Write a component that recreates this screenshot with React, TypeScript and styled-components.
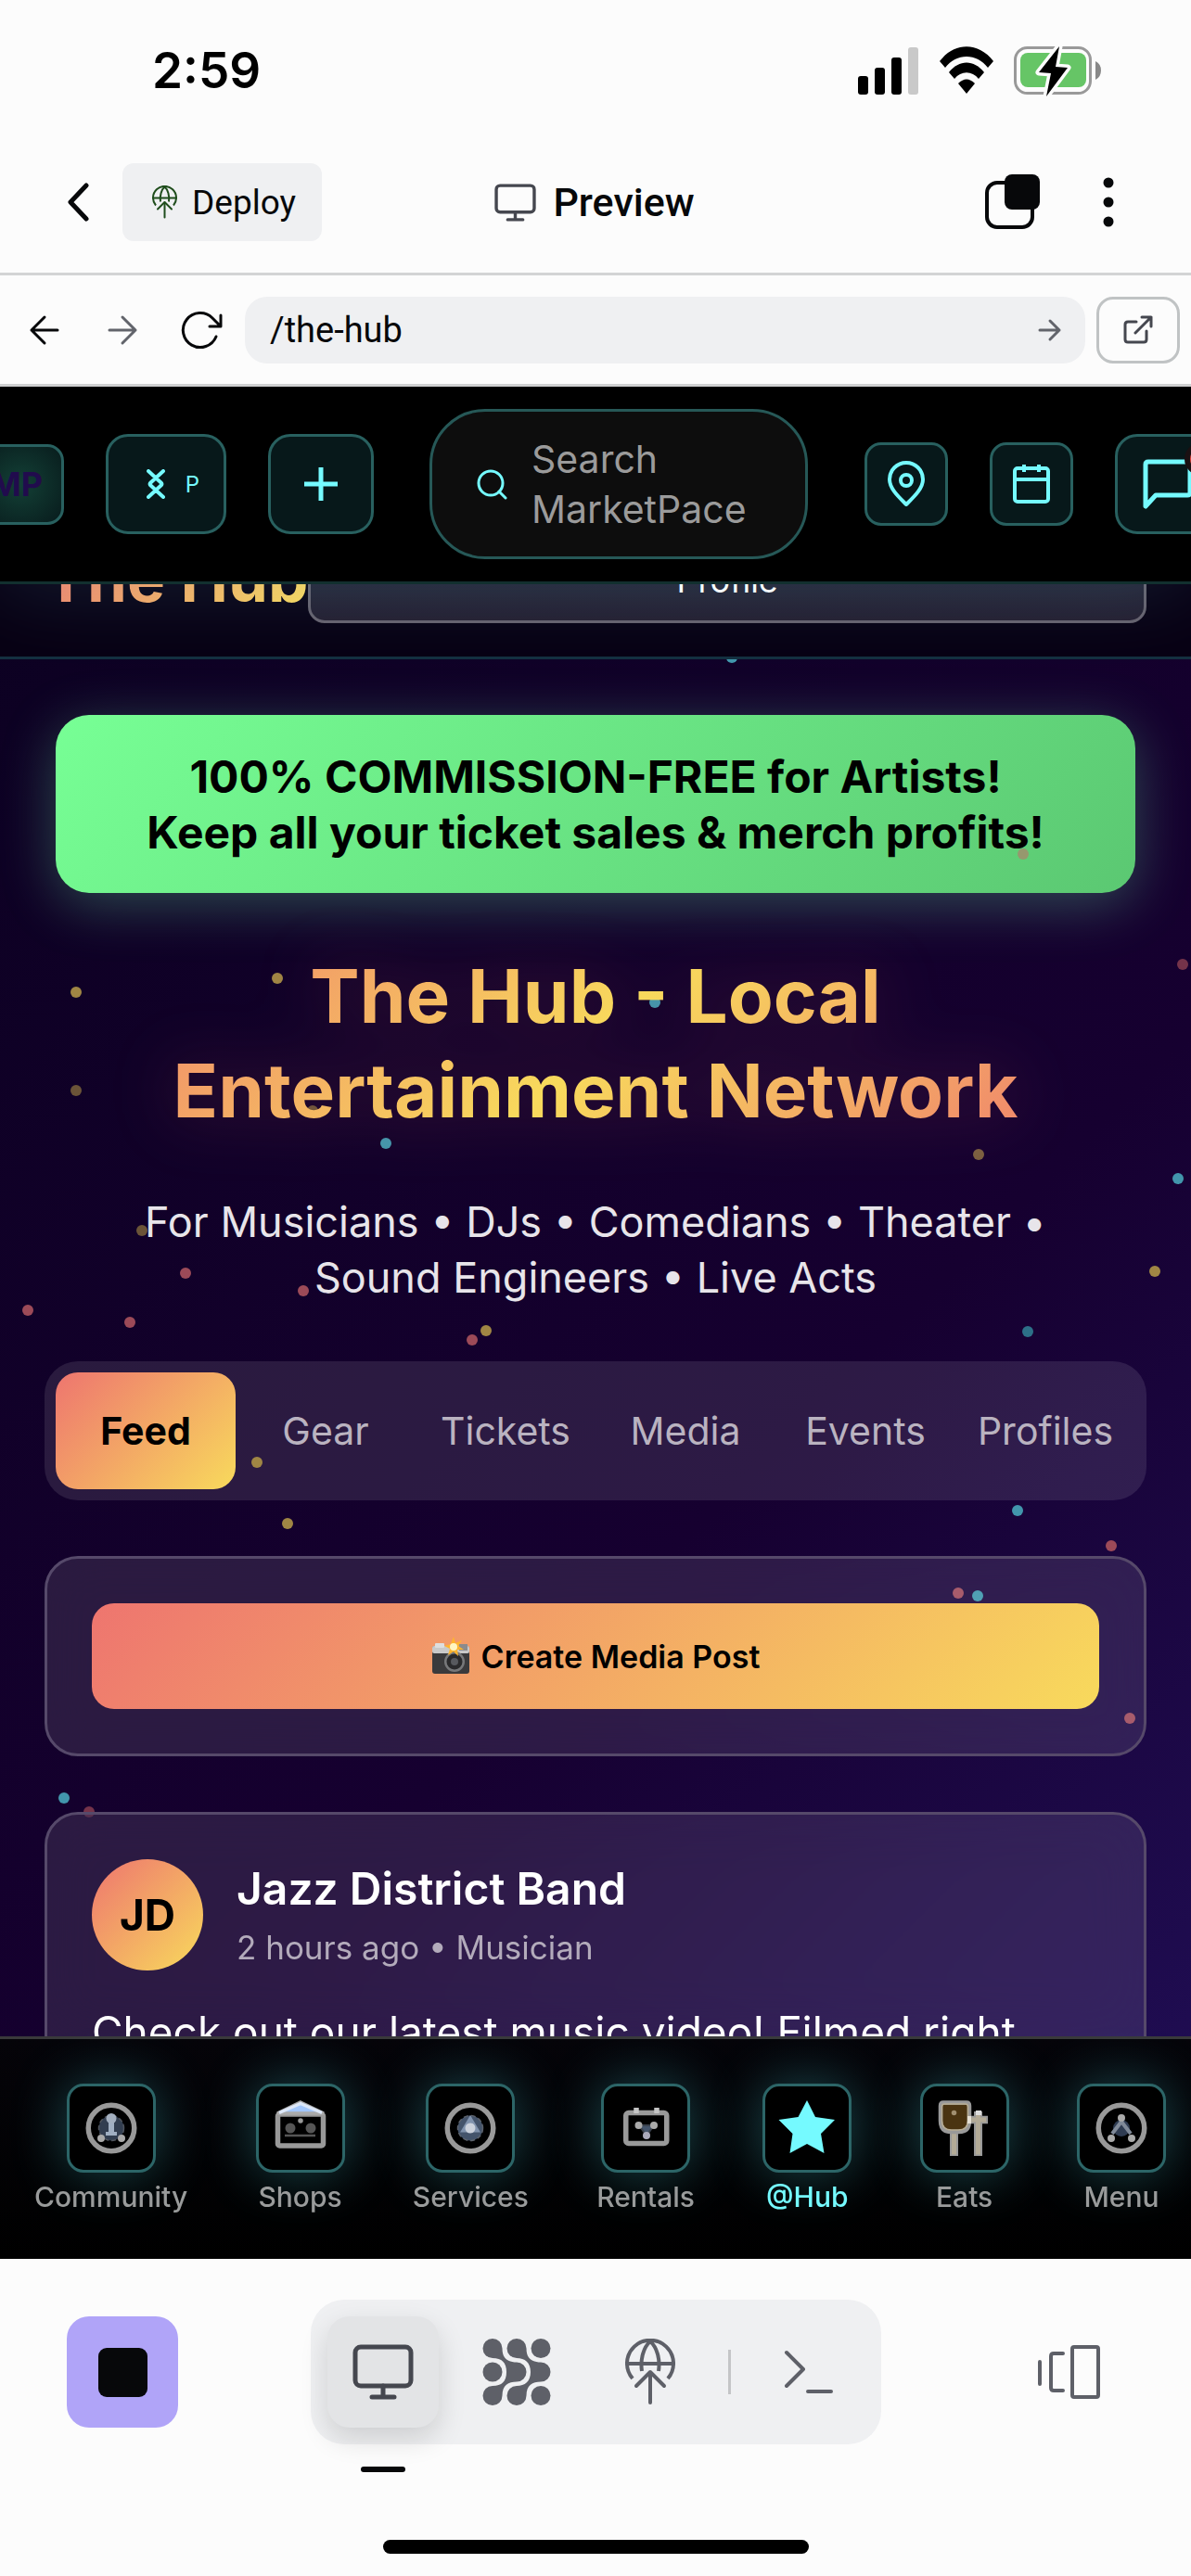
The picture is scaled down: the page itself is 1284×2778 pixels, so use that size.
import React from "react";
import styled, { createGlobalStyle, css } from "styled-components";

const GlobalStyle = createGlobalStyle`
  *, *::before, *::after { box-sizing: border-box; }
  html, body, #root { height: 100%; }
  body { margin: 0; background: #fcfcfc; font-family: Inter, "Liberation Sans", sans-serif; }
  button, input { font: inherit; color: inherit; }
  button { border: 0; padding: 0; background: none; cursor: pointer; }
  svg { display: block; flex: none; }
  h1, h2, h3, p { margin: 0; }
`;

const uiFont = `Roboto, "Noto Sans", sans-serif`;
const sunset = "linear-gradient(135deg, #ee756f, #f8da5c)";

const Screen = styled.div`
  display: flex;
  flex-direction: column;
  height: 100%;
  overflow: hidden;
`;

/* ---------- phone chrome ---------- */

const StatusBar = styled.div`
  display: flex;
  align-items: center;
  justify-content: space-between;
  height: 152px;
  padding: 0 97px 0 164px;
  color: #000;
`;

const Clock = styled.time`
  font-size: 53px;
  font-weight: 600;
`;

const StatusIcons = styled.div`
  display: flex;
  align-items: center;
  gap: 22px;
`;

const AppBar = styled.header`
  display: grid;
  grid-template-columns: 1fr auto 1fr;
  align-items: center;
  height: 145px;
  padding: 0 74px 10px 72px;
  border-bottom: 3px solid #d3d4d5;
  font-family: ${uiFont};
  color: #07080a;
`;

const BarSide = styled.div<{ $end?: boolean }>`
  display: flex;
  align-items: center;
  gap: ${(p) => (p.$end ? "58px" : "36px")};
  justify-content: ${(p) => (p.$end ? "flex-end" : "flex-start")};
`;

const DeployButton = styled.button`
  display: flex;
  align-items: center;
  gap: 16px;
  height: 84px;
  padding: 0 28px 0 32px;
  border-radius: 12px;
  background: #eff0f2;
  font-size: 37px;
`;

const BarTitle = styled.h1`
  display: flex;
  align-items: center;
  gap: 18px;
  font-size: 43px;
  font-weight: 500;
`;

const AddressBar = styled.form`
  display: flex;
  align-items: center;
  gap: 12px;
  height: 120px;
  padding: 0 12px 0 24px;
  border-bottom: 3px solid #cfd0d1;
  font-family: ${uiFont};
  color: #07080a;
`;

const AddressIcons = styled.div`
  display: flex;
  align-items: center;
  gap: 36px;
  margin-right: 12px;
`;

const AddressField = styled.label`
  display: flex;
  flex: 1;
  align-items: center;
  height: 72px;
  padding: 0 24px;
  border-radius: 24px;
  background: #eff0f2;
`;

const AddressInput = styled.input`
  flex: 1;
  min-width: 0;
  padding: 0 0 0 3px;
  border: 0;
  outline: 0;
  background: none;
  font-size: 38px;
`;

const OpenButton = styled.button`
  display: grid;
  place-items: center;
  width: 90px;
  height: 72px;
  border: 3px solid #c0c3c4;
  border-radius: 18px;
`;

/* ---------- previewed page ---------- */

const Web = styled.div`
  position: relative;
  display: flex;
  flex: 1;
  flex-direction: column;
  min-height: 0;
  overflow: hidden;
  background: linear-gradient(135deg, #0b0120 0%, #160030 60%, #210f58 100%);
  color: #fff;
`;

const SiteHeader = styled.nav`
  position: relative;
  z-index: 2;
  display: flex;
  align-items: center;
  gap: 45px;
  height: 213px;
  flex: none;
  border-bottom: 3px solid #12302f;
  background: #000;
  box-shadow: 0 6px 90px rgba(117, 250, 255, 0.12);
  color: #75faff;
`;

const tile = css`
  display: flex;
  flex: none;
  align-items: center;
  justify-content: center;
  border: 3px solid #28605f;
  background: #07181a;
`;

const LogoTile = styled.a`
  ${tile}
  justify-content: flex-end;
  width: 120px;
  height: 87px;
  margin-left: -51px;
  padding-right: 20px;
  border-radius: 18px;
  background: radial-gradient(circle at 70px 40px, #134036, #07181a 66px);
  color: #210b4d;
  font-size: 36px;
  font-weight: 700;
  text-decoration: none;
`;

const Tile = styled.button<{ $w: number }>`
  ${tile}
  width: ${(p) => p.$w}px;
  height: 108px;
  border-radius: 24px;
  font-size: 24px;
`;

const PaceTile = styled(Tile)`
  gap: 22px;
  padding-left: 15px;
`;

const SmallTile = styled.button`
  ${tile}
  width: 90px;
  height: 90px;
  border-radius: 18px;
`;

const ChatTile = styled(Tile)`
  position: relative;
`;

const ChatBadge = styled.span`
  position: absolute;
  top: 6px;
  left: 72px;
  width: 36px;
  height: 36px;
  border: 6px solid #1a1012;
  border-radius: 50%;
  background: #e8453c;
`;

const SearchPill = styled.label`
  display: flex;
  flex: none;
  align-items: center;
  gap: 26px;
  width: 408px;
  height: 162px;
  margin: 0 16px 0 15px;
  padding-left: 48px;
  border: 3px solid #265857;
  border-radius: 60px;
  background: #0d0d0d;
`;

const SearchText = styled.span`
  width: 240px;
  color: #9b9b9b;
  font-size: 41px;
  line-height: 54px;
`;

const HubBar = styled.div`
  position: relative;
  z-index: 1;
  display: flex;
  flex: none;
  align-items: flex-end;
  height: 81px;
  padding: 0 48px;
  border-bottom: 3px solid #143040;
  background: #080014;
  overflow: hidden;
`;

const HubName = styled.h2`
  flex: none;
  margin-bottom: 42px;
  background: ${sunset};
  background-clip: text;
  -webkit-background-clip: text;
  color: transparent;
  font-size: 69px;
  font-weight: 700;
  line-height: 84px;
`;

const ProfileButton = styled.button`
  flex: 1;
  height: 96px;
  margin-bottom: 36px;
  padding-top: 3px;
  border: 3px solid #66606d;
  border-radius: 18px;
  background: linear-gradient(#252a3e, #241d30);
  color: #fff;
  font-size: 36px;
`;

const Content = styled.main`
  position: relative;
  flex: 1;
  min-height: 0;
  overflow: hidden;
`;

const Particle = styled.span<{ $color: string; $front?: boolean }>`
  position: absolute;
  z-index: ${(p) => (p.$front ? 2 : 0)};
  width: 12px;
  height: 12px;
  margin: -6px 0 0 -6px;
  border-radius: 50%;
  background: ${(p) => p.$color};
`;

const Column = styled.div`
  position: relative;
  z-index: 1;
  display: flex;
  flex-direction: column;
  gap: 60px;
  padding: 60px 48px;
`;

const Hero = styled.section`
  text-align: center;
  padding: 0 12px;
`;

const Promo = styled.p`
  padding: 37px 48px 35px;
  border-radius: 36px;
  background: linear-gradient(135deg, #77ff95, #5bc872);
  box-shadow: 0 12px 60px rgba(117, 250, 180, 0.3);
  color: #000;
  font-size: 48px;
  font-weight: 700;
  line-height: 60px;
`;

const HeroTitle = styled.h2`
  margin-top: 60px;
  background: linear-gradient(135deg, #ee756f, #f8da5c 50%, #ee756f);
  background-clip: text;
  -webkit-background-clip: text;
  color: transparent;
  filter: drop-shadow(0 0 36px rgba(238, 117, 111, 0.24));
  font-size: 80px;
  font-weight: 700;
  line-height: 102px;
`;

const HeroText = styled.p`
  margin: 61px 48px 0;
  color: #e8e5ea;
  font-size: 45px;
  line-height: 60px;
`;

const Tabs = styled.div`
  display: grid;
  grid-template-columns: repeat(6, 1fr);
  padding: 12px;
  border-radius: 36px;
  background: rgba(255, 255, 255, 0.1);
`;

const Tab = styled.button<{ $active?: boolean }>`
  height: 126px;
  border-radius: 24px;
  color: ${(p) => (p.$active ? "#000" : "#bab3c0")};
  background: ${(p) => (p.$active ? sunset : "none")};
  font-size: 41px;
  font-weight: ${(p) => (p.$active ? 700 : 400)};
`;

const Card = styled.article`
  padding: 48px;
  border: 3px solid #56496a;
  border-radius: 36px;
  background: rgba(255, 255, 255, 0.1);
  backdrop-filter: blur(30px);
`;

const CreateButton = styled.button`
  display: flex;
  align-items: center;
  justify-content: center;
  gap: 12px;
  width: 100%;
  height: 114px;
  border-radius: 24px;
  background: ${sunset};
  color: #000;
  font-size: 34px;
  font-weight: 600;
`;

const PostHead = styled.header`
  display: flex;
  align-items: center;
  gap: 36px;
`;

const Avatar = styled.span`
  display: grid;
  place-items: center;
  width: 120px;
  height: 120px;
  border-radius: 50%;
  background: ${sunset};
  color: #000;
  font-size: 46px;
  font-weight: 700;
`;

const PostAuthor = styled.h3`
  font-size: 48px;
  font-weight: 600;
  line-height: 60px;
`;

const PostMeta = styled.p`
  margin-top: 9px;
  color: #b3abbb;
  font-size: 35px;
  line-height: 48px;
`;

const PostText = styled.p`
  margin-top: 33px;
  font-size: 46px;
  line-height: 66px;
`;

const SiteNav = styled.nav`
  position: relative;
  z-index: 2;
  display: flex;
  flex: none;
  align-items: flex-start;
  justify-content: space-between;
  height: 240px;
  padding: 48px 27px 0 37px;
  border-top: 3px solid #3a3a3b;
  background: linear-gradient(#050409, #000);
`;

const NavItem = styled.a<{ $active?: boolean }>`
  display: flex;
  flex-direction: column;
  align-items: center;
  gap: 8px;
  color: ${(p) => (p.$active ? "#75faff" : "#999b9b")};
  font-size: 30px;
  font-weight: 500;
  line-height: 36px;
  text-decoration: none;
`;

const NavIcon = styled.span`
  display: grid;
  place-items: center;
  width: 96px;
  height: 96px;
  border: 3px solid #2c6567;
  border-radius: 18px;
  background: #000;
  box-shadow: 0 0 60px rgba(80, 230, 235, 0.32);
`;

/* ---------- bottom toolbar ---------- */

const Toolbar = styled.footer`
  display: grid;
  grid-template-columns: 1fr auto 1fr;
  align-items: center;
  height: 244px;
  padding: 0 72px;
  flex: none;
`;

const StopButton = styled.button`
  display: grid;
  place-items: center;
  width: 120px;
  height: 120px;
  border-radius: 24px;
  background: #b0a4f8;
`;

const StopMark = styled.span`
  width: 53px;
  height: 53px;
  border-radius: 9px;
  background: #07080a;
`;

const ToolGroup = styled.div`
  display: flex;
  align-items: center;
  gap: 24px;
  height: 156px;
  padding: 0 18px;
  border-radius: 36px;
  background: #eff0f2;
  color: #5e6068;
`;

const Tool = styled.button<{ $active?: boolean }>`
  position: relative;
  display: grid;
  place-items: center;
  width: 120px;
  height: 120px;
  border-radius: 24px;
  ${(p) =>
    p.$active &&
    css`
      background: #e3e4e6;
      color: #40424a;
      box-shadow: 0 12px 30px rgba(0, 0, 0, 0.14);
      &::after {
        content: "";
        position: absolute;
        left: 36px;
        bottom: -48px;
        width: 48px;
        height: 6px;
        border-radius: 3px;
        background: #07080a;
      }
    `}
`;

const ToolDivider = styled.span`
  width: 3px;
  height: 48px;
  background: #c4c5c7;
`;

const DevicesButton = styled.button`
  justify-self: end;
  padding: 0 24px;
  color: #5e6068;
`;

const HomeArea = styled.div`
  display: flex;
  justify-content: center;
  flex: none;
  height: 98px;
  padding-top: 59px;
`;

const HomeBar = styled.span`
  width: 459px;
  height: 15px;
  border-radius: 8px;
  background: #000;
`;

/* ---------- drawings ---------- */

type StrokeProps = {
  w: number;
  h: number;
  sw?: number;
  color?: string;
  square?: boolean;
  children: React.ReactNode;
};

function Stroke({ w, h, sw = 4, color = "currentColor", square, children }: StrokeProps) {
  return (
    <svg
      width={w}
      height={h}
      viewBox={`0 0 ${w} ${h}`}
      fill="none"
      stroke={color}
      strokeWidth={sw}
      strokeLinecap={square ? "butt" : "round"}
      strokeLinejoin={square ? "miter" : "round"}
      aria-hidden="true"
    >
      {children}
    </svg>
  );
}

const Signal = () => (
  <svg width="66" height="52" viewBox="0 0 66 52" aria-hidden="true">
    <rect x="0" y="32" width="11" height="20" rx="3" />
    <rect x="18" y="23" width="11" height="29" rx="3" />
    <rect x="36" y="12" width="11" height="40" rx="3" />
    <rect x="54" y="1" width="11" height="51" rx="3" fill="#c9c9c9" />
  </svg>
);

const Wifi = () => (
  <svg width="58" height="52" viewBox="0 0 58 52" aria-hidden="true">
    <path d="M0 16 C16 -5 42 -5 58 16 L52 23 C40 7 18 7 6 23 Z" />
    <path d="M10 28 C21 14 37 14 48 28 L42 35 C35 26 23 26 16 35 Z" />
    <path d="M20 40 Q29 31 38 40 L29 51 Z" />
  </svg>
);

const Battery = () => (
  <svg width="94" height="56" viewBox="0 0 94 56" aria-hidden="true">
    <rect x="1.5" y="3.5" width="81" height="49" rx="13" fill="none" stroke="#999" strokeWidth="3" />
    <path d="M88 18 Q94 21 94 28 Q94 35 88 38 Z" fill="#888" />
    <rect x="7" y="9" width="71" height="37" rx="8" fill="#66c566" />
    <path
      d="M49 2 L27 30 L40 31 L35 56 L58 25 L45 24 Z"
      fill="#000"
      stroke="#fcfcfc"
      strokeWidth="7"
      strokeLinejoin="round"
      paintOrder="stroke"
    />
  </svg>
);

const GlobeUp = ({ w, h, sw, color }: { w: number; h: number; sw: number; color?: string }) => (
  <svg
    width={w}
    height={h}
    viewBox="0 0 54 72"
    fill="none"
    stroke={color || "currentColor"}
    strokeWidth={sw}
    strokeLinecap="round"
    strokeLinejoin="round"
    aria-hidden="true"
  >
    <path d="M8 43 A25 25 0 1 1 46 43" strokeLinecap="butt" />
    <path d="M18 35 C16 22 20 9 27 3 C34 9 38 22 36 35" strokeLinecap="butt" />
    <path d="M2 27 H52" />
    <path d="M27 37 V69" />
    <path d="M12 51 L27 36 L42 51" />
  </svg>
);

const Monitor = ({ w, h, sw }: { w: number; h: number; sw: number }) => (
  <svg
    width={w}
    height={h}
    viewBox="0 0 66 60"
    fill="none"
    stroke="#45474f"
    strokeWidth={sw}
    strokeLinecap="round"
    aria-hidden="true"
  >
    <rect x="3" y="3" width="60" height="42" rx="6" />
    <path d="M33 45 V57 M21 57 H45" />
  </svg>
);

const AgentMark = () => (
  <svg width="74" height="72" viewBox="0 0 74 72" fill="currentColor" aria-hidden="true">
    <circle cx="11" cy="36" r="10.5" />
    <circle cx="63" cy="10.5" r="10.5" />
    <circle cx="63" cy="61.5" r="10.5" />
    <path d="M11 0 A10.5 10.5 0 0 1 21.5 10.5 C21.5 22 28 25.5 37 25.5 A10.5 10.5 0 0 1 37 46.5 C28 46.5 21.5 50 21.5 61.5 A10.5 10.5 0 1 1 11 51 C21 51 26 46 26 36 C26 26 21 21 11 21 A10.5 10.5 0 0 1 11 0 Z" />
    <path d="M37 0 A10.5 10.5 0 0 1 47.5 10.5 C47.5 22 54 25.5 63 25.5 A10.5 10.5 0 0 1 63 46.5 C54 46.5 47.5 50 47.5 61.5 A10.5 10.5 0 1 1 37 51 C46 51 52 46 52 36 C52 26 46 21 37 21 A10.5 10.5 0 0 1 37 0 Z" />
  </svg>
);

const Camera = () => (
  <svg width="42" height="42" viewBox="0 0 42 42" aria-hidden="true">
    <rect x="1" y="10" width="40" height="30" rx="3" fill="#3a3a3c" />
    <rect x="1" y="10" width="40" height="8" rx="2" fill="#c9c9c9" />
    <rect x="4" y="7" width="10" height="5" rx="1" fill="#dedede" />
    <rect x="30" y="8" width="9" height="7" fill="#8b8b8d" />
    <circle cx="25" cy="27" r="11" fill="#77787a" />
    <circle cx="25" cy="27" r="8.5" fill="#2a2a2c" />
    <circle cx="25" cy="27" r="4" fill="#57595e" />
    <path d="M24 0 L26 7 L33 4 L29 10 L35 14 L28 14 L29 21 L24 16 L18 20 L20 13 L14 10 L21 8 Z" fill="#ffb52e" />
    <circle cx="24" cy="11" r="4" fill="#fff6c2" />
  </svg>
);

const NavArt = ({ children }: { children: React.ReactNode }) => (
  <svg width="90" height="90" viewBox="3 3 90 90" fill="none" aria-hidden="true">
    {children}
  </svg>
);

const Ring = () => <circle cx="48" cy="48" r="24.75" stroke="#999" strokeWidth="5.5" />;

const CommunityArt = () => (
  <NavArt>
    <Ring />
    <circle cx="48" cy="48" r="13.5" fill="#323e50" stroke="#50555d" strokeWidth="1.5" strokeDasharray="5 3" />
    <path d="M45 40 H51 V52 H54 V56 H42 V52 H45 Z" fill="#a0afc2" />
    <circle cx="48" cy="37.5" r="5.5" fill="#a3afbf" />
    <circle cx="37" cy="59" r="4" fill="#aaa" />
    <circle cx="59" cy="59" r="4" fill="#aaa" />
  </NavArt>
);

const ShopsArt = () => (
  <NavArt>
    <rect x="23.5" y="33" width="49" height="34" rx="2" stroke="#999" strokeWidth="5.5" />
    <path d="M48 20 L73 32 H23 Z" fill="#a2c6fa" stroke="#aaa" strokeWidth="3.5" />
    <path d="M25 31.5 L48 21.5 L71 31.5" stroke="#dce7f8" strokeWidth="3" />
    <circle cx="37" cy="48" r="5.5" fill="#555" />
    <circle cx="59" cy="48" r="5.5" fill="#555" />
    <circle cx="48" cy="40" r="2.75" fill="#999" />
    <path d="M31 56 H64" stroke="#555" strokeWidth="2.5" />
  </NavArt>
);

const ServicesArt = () => (
  <NavArt>
    <Ring />
    <circle cx="48" cy="48" r="13.5" fill="#44546b" stroke="#5c626c" strokeWidth="1.5" strokeDasharray="5 3" />
    <path d="M48 34 L59 52.5 H37 Z" fill="#8193ad" />
    <circle cx="48" cy="48" r="5.5" fill="#ccd2dc" />
  </NavArt>
);

const RentalsArt = () => (
  <NavArt>
    <rect x="26.75" y="31.5" width="44" height="33" rx="3" stroke="#999" strokeWidth="5.5" />
    <path d="M38 26 V32 M60 26 V32" stroke="#c4c4c4" strokeWidth="5.5" />
    <path d="M41 45 H57 L49 56 Z" fill="#44546b" stroke="#3a414c" strokeWidth="2" />
    <circle cx="40.5" cy="45" r="4" fill="#aaa" />
    <circle cx="57" cy="45" r="4" fill="#aaa" />
    <circle cx="49" cy="56" r="4" fill="#aab" />
  </NavArt>
);

const HubArt = () => (
  <NavArt>
    <path
      d="M48 18 L57 36 L78 39 L63 54 L66.5 75 L48 65 L29.5 75 L32.5 54 L17.5 39 L38.5 36 Z"
      fill="#75faff"
    />
  </NavArt>
);

const EatsArt = () => (
  <NavArt>
    <path d="M36.5 52 V78 M62.5 30 V78" stroke="#999" strokeWidth="9" />
    <path d="M52 39 H73" stroke="#999" strokeWidth="8.5" />
    <path d="M36.5 52 V76.5 M62.5 33 V76.5 M54 39 H71" stroke="#b3ab97" strokeWidth="5" />
    <path d="M22 24 Q22 20.5 25 20.5 H50 Q53 20.5 53 24 V40 Q53 52 42 52 H33 Q22 52 22 40 Z" fill="#4a3411" stroke="#999" strokeWidth="4.5" />
    <path d="M23.5 25 Q23.5 22 26 22 H49 Q51.5 22 51.5 25 V40 Q51.5 50 41 50 H34 Q23.5 50 23.5 40 Z" stroke="#b8ad93" strokeWidth="1.5" />
    <circle cx="36.5" cy="31.5" r="2.75" fill="#a08f70" />
    <rect x="51" y="35" width="4" height="8" fill="#e5e0d4" />
    <rect x="60" y="29" width="6" height="5" fill="#ddd" />
  </NavArt>
);

const MenuArt = () => (
  <NavArt>
    <Ring />
    <circle cx="48" cy="48" r="9" fill="#2f3c52" />
    <path d="M48 41 L38 54 M48 41 L58 54" stroke="#808a99" strokeWidth="4" />
    <circle cx="48" cy="37" r="4" fill="#aaa" />
    <circle cx="37" cy="59" r="4" fill="#aaa" />
    <circle cx="59" cy="59" r="4" fill="#aaa" />
  </NavArt>
);

/* ---------- data ---------- */

const YELLOW = "#a08644";
const YELLOW_DIM = "#6b5438";
const RED = "#9c4a58";
const RED_DIM = "#75334a";
const CYAN = "#4296ac";
const CYAN_DIM = "#2d7088";

type Dot = { x: number; y: number; color: string; front?: boolean };

const dots: Dot[] = [
  { x: 789, y: -2, color: CYAN },
  { x: 1103, y: 210, color: "#96986e", front: true },
  { x: 1275, y: 329, color: RED_DIM },
  { x: 299, y: 344, color: YELLOW },
  { x: 82, y: 359, color: YELLOW },
  { x: 706, y: 370, color: CYAN },
  { x: 82, y: 465, color: YELLOW_DIM },
  { x: 337, y: 487, color: YELLOW_DIM },
  { x: 416, y: 522, color: CYAN },
  { x: 1055, y: 534, color: "#7b6040" },
  { x: 1270, y: 560, color: CYAN },
  { x: 153, y: 616, color: YELLOW_DIM },
  { x: 1245, y: 660, color: YELLOW },
  { x: 200, y: 662, color: RED },
  { x: 327, y: 681, color: RED },
  { x: 30, y: 702, color: RED },
  { x: 140, y: 715, color: RED },
  { x: 524, y: 724, color: YELLOW },
  { x: 1108, y: 725, color: CYAN_DIM },
  { x: 509, y: 734, color: RED },
  { x: 277, y: 866, color: YELLOW, front: true },
  { x: 1097, y: 918, color: CYAN },
  { x: 310, y: 932, color: YELLOW },
  { x: 1198, y: 956, color: RED },
  { x: 1033, y: 1007, color: "#a85c6c", front: true },
  { x: 1054, y: 1010, color: "#50a0b4", front: true },
  { x: 1218, y: 1142, color: "#a85c6c", front: true },
  { x: 69, y: 1228, color: CYAN },
  { x: 96, y: 1243, color: RED_DIM },
];

const tabs = ["Feed", "Gear", "Tickets", "Media", "Events", "Profiles"];

const navItems = [
  { label: "Community", Art: CommunityArt },
  { label: "Shops", Art: ShopsArt },
  { label: "Services", Art: ServicesArt },
  { label: "Rentals", Art: RentalsArt },
  { label: "@Hub", Art: HubArt },
  { label: "Eats", Art: EatsArt },
  { label: "Menu", Art: MenuArt },
];

export default function App() {
  return (
    <Screen>
      <GlobalStyle />

      <StatusBar>
        <Clock>2:59</Clock>
        <StatusIcons>
          <Signal />
          <Wifi />
          <Battery />
        </StatusIcons>
      </StatusBar>

      <AppBar>
        <BarSide>
          <button aria-label="Back">
            <Stroke w={24} h={42} sw={5}>
              <path d="M21 3 L4 21 L21 39" />
            </Stroke>
          </button>
          <DeployButton>
            <GlobeUp w={27} h={36} sw={4} color="#1f4d1c" />
            Deploy
          </DeployButton>
        </BarSide>
        <BarTitle>
          <Monitor w={45} h={41} sw={5} />
          Preview
        </BarTitle>
        <BarSide $end>
          <button aria-label="Windows">
            <svg width="60" height="60" viewBox="0 0 60 60" aria-hidden="true">
              <rect x="2" y="9" width="49" height="48" rx="11" fill="none" stroke="#07080a" strokeWidth="4" />
              <rect x="21" y="0" width="38" height="38" rx="8" fill="#07080a" />
            </svg>
          </button>
          <button aria-label="More">
            <svg width="30" height="54" viewBox="-9 0 30 54" fill="#07080a" aria-hidden="true">
              <circle cx="6" cy="6" r="5.5" />
              <circle cx="6" cy="27" r="5.5" />
              <circle cx="6" cy="48" r="5.5" />
            </svg>
          </button>
        </BarSide>
      </AppBar>

      <AddressBar onSubmit={(e) => e.preventDefault()}>
        <AddressIcons>
          <button type="button" aria-label="Previous page">
            <Stroke w={48} h={48} sw={3}>
              <path d="M38 24 H10 M24 10 L10 24 L24 38" />
            </Stroke>
          </button>
          <button type="button" aria-label="Next page">
            <Stroke w={48} h={48} sw={3} color="#62646b">
              <path d="M10 24 H38 M24 10 L38 24 L24 38" />
            </Stroke>
          </button>
          <button type="button" aria-label="Reload">
            <Stroke w={48} h={48} sw={3}>
              <path d="M41 31 A18.5 18.5 0 1 1 37 11 L45 19 M46 8 V20 H34" />
            </Stroke>
          </button>
        </AddressIcons>
        <AddressField>
          <AddressInput aria-label="Path" defaultValue="/the-hub" />
          <Stroke w={30} h={30} sw={3} color="#62646b">
            <path d="M5 15 H26 M16 5 L26 15 L16 25" />
          </Stroke>
        </AddressField>
        <OpenButton type="button" aria-label="Open in new tab">
          <Stroke w={32} h={32} sw={3} color="#45474f">
            <path d="M14 7 H5 Q2 7 2 10 V26 Q2 29 5 29 H22 Q25 29 25 26 V17" />
            <path d="M13 19 L30 2 M20 2 H30 V12" />
          </Stroke>
        </OpenButton>
      </AddressBar>

      <Web>
        <SiteHeader>
          <LogoTile href="#home">MP</LogoTile>
          <PaceTile $w={130}>
            <Stroke w={20} h={32} sw={4}>
              <path d="M2 2 L15 14 Q18 16 15 18 L2 30 M18 2 L5 14 Q2 16 5 18 L18 30" />
            </Stroke>
            P
          </PaceTile>
          <Tile $w={114} aria-label="Add">
            <Stroke w={36} h={36} sw={5} square>
              <path d="M18 0 V36 M0 18 H36" />
            </Stroke>
          </Tile>
          <SearchPill>
            <Stroke w={33} h={33} sw={3}>
              <circle cx="15" cy="15" r="13" />
              <path d="M24 24 L31 31" />
            </Stroke>
            <SearchText>Search MarketPace</SearchText>
          </SearchPill>
          <SmallTile aria-label="Location">
            <Stroke w={40} h={50} sw={4}>
              <path d="M20 47 C12 39 2 30 2 20 A18 18 0 0 1 38 20 C38 30 28 39 20 47 Z" />
              <circle cx="20" cy="21" r="6" />
            </Stroke>
          </SmallTile>
          <SmallTile aria-label="Calendar">
            <Stroke w={40} h={42} sw={4} square>
              <rect x="2" y="4" width="36" height="36" rx="3" />
              <path d="M2 16 H38 M12 0 V8 M28 0 V8" />
            </Stroke>
          </SmallTile>
          <ChatTile $w={114} aria-label="Messages">
            <Stroke w={54} h={54} sw={5}>
              <path d="M3 51 V6 Q3 3 6 3 H48 Q51 3 51 6 V36 Q51 39 48 39 H14 Z" />
            </Stroke>
            <ChatBadge />
          </ChatTile>
        </SiteHeader>

        <HubBar>
          <HubName>The Hub</HubName>
          <ProfileButton>Profile</ProfileButton>
        </HubBar>

        <Content>
          {dots.map((d) => (
            <Particle
              key={`${d.x}-${d.y}`}
              $color={d.color}
              $front={d.front}
              style={{ left: `${(d.x / 1284) * 100}%`, top: d.y }}
            />
          ))}
          <Column>
            <Hero>
              <Promo>
                100% COMMISSION-FREE for Artists!
                <br />
                Keep all your ticket sales &amp; merch profits!
              </Promo>
              <HeroTitle>The Hub - Local Entertainment Network</HeroTitle>
              <HeroText>
                For Musicians • DJs • Comedians • Theater • Sound Engineers • Live Acts
              </HeroText>
            </Hero>

            <Tabs role="tablist">
              {tabs.map((t, i) => (
                <Tab key={t} role="tab" aria-selected={i === 0} $active={i === 0}>
                  {t}
                </Tab>
              ))}
            </Tabs>

            <Card>
              <CreateButton>
                <Camera />
                Create Media Post
              </CreateButton>
            </Card>

            <Card>
              <PostHead>
                <Avatar>JD</Avatar>
                <div>
                  <PostAuthor>Jazz District Band</PostAuthor>
                  <PostMeta>2 hours ago • Musician</PostMeta>
                </div>
              </PostHead>
              <PostText>Check out our latest music video! Filmed right</PostText>
            </Card>
          </Column>
        </Content>

        <SiteNav>
          {navItems.map(({ label, Art }) => (
            <NavItem key={label} href="#nav" $active={label === "@Hub"}>
              <NavIcon>
                <Art />
              </NavIcon>
              {label}
            </NavItem>
          ))}
        </SiteNav>
      </Web>

      <Toolbar>
        <StopButton aria-label="Stop">
          <StopMark />
        </StopButton>
        <ToolGroup>
          <Tool $active aria-label="Preview">
            <Monitor w={66} h={60} sw={5} />
          </Tool>
          <Tool aria-label="Agent">
            <AgentMark />
          </Tool>
          <Tool aria-label="Deploy">
            <GlobeUp w={54} h={72} sw={4} />
          </Tool>
          <ToolDivider />
          <Tool aria-label="Console">
            <Stroke w={54} h={48} sw={4}>
              <path d="M3 3 L21 21 L3 39 M26 45 H51" />
            </Stroke>
          </Tool>
        </ToolGroup>
        <DevicesButton aria-label="Devices">
          <Stroke w={70} h={60} sw={4}>
            <rect x="38" y="3" width="28" height="54" rx="2" />
            <path d="M28 10 H18 Q15 10 15 13 V47 Q15 50 18 50 H28 M3 19 V43" />
          </Stroke>
        </DevicesButton>
      </Toolbar>

      <HomeArea>
        <HomeBar />
      </HomeArea>
    </Screen>
  );
}
